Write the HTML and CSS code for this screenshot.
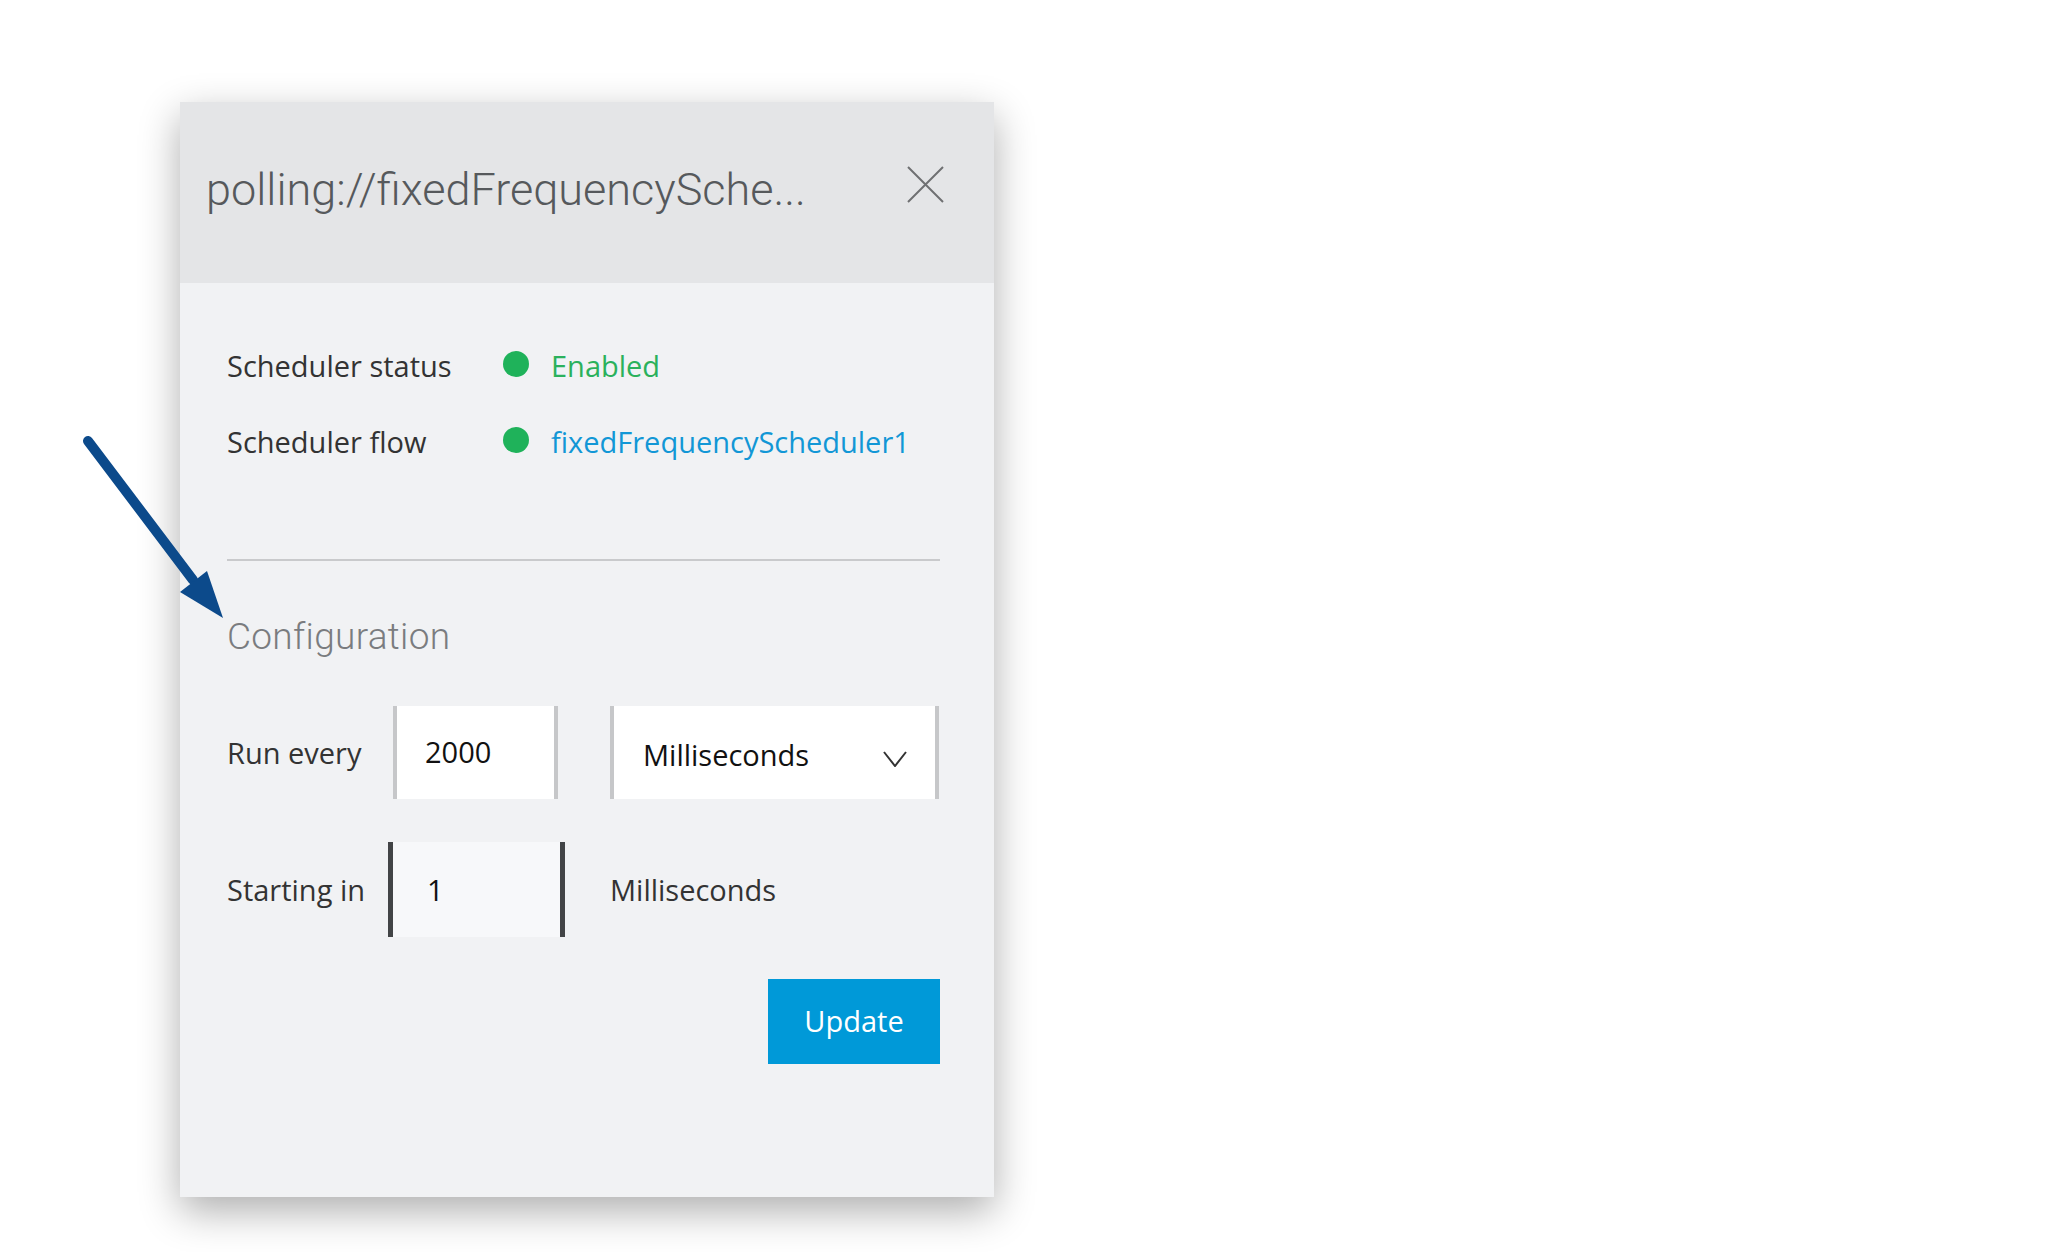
FILE: index.html
```html
<!DOCTYPE html>
<html lang="en">
<head>
<meta charset="utf-8">
<title>Scheduler</title>
<link rel="stylesheet" href="styles.css">
</head>
<body>
<div class="page">
  <section class="panel">
    <header class="panel-header">
      <h1 class="title">polling://fixedFrequencySche...</h1>
      <button class="close" aria-label="Close">
        <svg width="37" height="37" viewBox="0 0 37 37"><path d="M1 1 L36 36 M36 1 L1 36" stroke="#6f7072" stroke-width="2" fill="none"/></svg>
      </button>
    </header>
    <div class="panel-body">
      <div class="info">
        <div class="info-row">
          <span class="info-label">Scheduler status</span>
          <span class="info-value"><span class="dot"></span><span class="status">Enabled</span></span>
        </div>
        <div class="info-row second">
          <span class="info-label">Scheduler flow</span>
          <span class="info-value"><span class="dot"></span><a class="flow-link">fixedFrequencyScheduler1</a></span>
        </div>
      </div>
      <div class="divider"></div>
      <h2 class="section-title">Configuration</h2>
      <div class="form-row row-run">
        <span class="field-label">Run every</span>
        <div class="input input-plain">2000</div>
        <div class="select">
          <span>Milliseconds</span>
          <svg class="chevron" width="24" height="16" viewBox="0 0 24 16"><path d="M1 1 L12 15 L23 1" stroke="#333" stroke-width="2" fill="none"/></svg>
        </div>
      </div>
      <div class="form-row row-start">
        <span class="field-label">Starting in</span>
        <div class="input input-focus">1</div>
        <span class="unit">Milliseconds</span>
      </div>
      <div class="actions">
        <button class="btn-update">Update</button>
      </div>
    </div>
  </section>
  <svg class="arrow" width="260" height="640" viewBox="0 0 260 640">
    <line x1="88" y1="441" x2="193" y2="580" stroke="#0c4a8b" stroke-width="10" stroke-linecap="round"/>
    <polygon points="223,618 180,592 207,571" fill="#0c4a8b"/>
  </svg>
</div>
</body>
</html>
```

FILE: styles.css
```css
html, body {
  margin: 0;
  padding: 0;
  background: #ffffff;
}

.page {
  position: relative;
  padding: 102px 0 0 180px;
  min-height: 1150px;
}

.panel {
  width: 814px;
  height: 1095px;
  box-sizing: border-box;
  background: #f1f2f4;
  box-shadow: 0 14px 38px rgba(0, 0, 0, 0.32);
  display: flex;
  flex-direction: column;
}

.panel-header {
  height: 181px;
  box-sizing: border-box;
  background: #e4e5e7;
  display: flex;
  align-items: flex-start;
  justify-content: space-between;
  padding: 62px 50px 0 26px;
}

.title {
  margin: 0;
  font-family: Roboto, "Open Sans", sans-serif;
  font-weight: 300;
  font-size: 45px;
  line-height: 52px;
  color: #56595c;
  letter-spacing: 0;
  white-space: nowrap;
}

.close {
  margin: 2px 0 0 0;
  padding: 0;
  border: none;
  background: transparent;
  width: 37px;
  height: 37px;
  display: block;
}

.close svg {
  display: block;
}

.panel-body {
  padding: 63px 54px 0 47px;
  font-family: "Open Sans", "Noto Sans", sans-serif;
  font-size: 29px;
  color: #333333;
}

.info-row {
  display: flex;
  height: 40px;
  line-height: 40px;
}

.info-row.second {
  margin-top: 36px;
}

.info-label {
  width: 276px;
  flex: none;
}

.info-value {
  display: flex;
  align-items: flex-start;
}

.dot {
  width: 26px;
  height: 26px;
  border-radius: 50%;
  background: #1fb25a;
  margin: 5px 22px 0 0;
  flex: none;
}

.status {
  color: #2bb15c;
}

.flow-link {
  color: #1297d6;
  text-decoration: none;
}

.divider {
  height: 2px;
  background: #c9cacc;
  margin-top: 97px;
}

.section-title {
  margin: 54px 0 0 0;
  font-family: Roboto, "Open Sans", sans-serif;
  font-weight: 300;
  font-size: 37px;
  line-height: 44px;
  color: #7a7c7f;
  letter-spacing: 0.3px;
}

.form-row {
  display: flex;
  align-items: stretch;
}

.row-run {
  margin-top: 47px;
  height: 93px;
}

.row-start {
  margin-top: 43px;
  height: 95px;
}

.field-label {
  flex: none;
  align-self: center;
  line-height: 40px;
}

.row-run .field-label {
  width: 166px;
}

.row-start .field-label {
  width: 161px;
}

.input {
  box-sizing: border-box;
  flex: none;
  color: #111111;
}

.input-plain {
  width: 165px;
  line-height: 91px;
  background: #ffffff;
  border-left: 4px solid #c6c7c9;
  border-right: 4px solid #c6c7c9;
  padding-left: 28px;
}

.input-focus {
  width: 177px;
  line-height: 95px;
  background: #f7f8fa;
  border-left: 5px solid #424446;
  border-right: 5px solid #424446;
  padding-left: 34px;
}

.select {
  box-sizing: border-box;
  width: 329px;
  margin-left: 52px;
  background: #ffffff;
  border-left: 4px solid #c6c7c9;
  border-right: 4px solid #c6c7c9;
  padding: 4px 28px 0 29px;
  display: flex;
  align-items: center;
  justify-content: space-between;
  color: #111111;
}

.chevron {
  display: block;
  margin-top: 8px;
}

.unit {
  align-self: center;
  margin-left: 45px;
  line-height: 40px;
}

.actions {
  display: flex;
  justify-content: flex-end;
  margin-top: 42px;
}

.btn-update {
  width: 172px;
  height: 85px;
  border: none;
  background: #0099d8;
  color: #ffffff;
  font-family: "Open Sans", "Noto Sans", sans-serif;
  font-size: 29px;
  padding: 0 0 2px 0;
}

.arrow {
  position: absolute;
  left: 0;
  top: 0;
  pointer-events: none;
}
```
